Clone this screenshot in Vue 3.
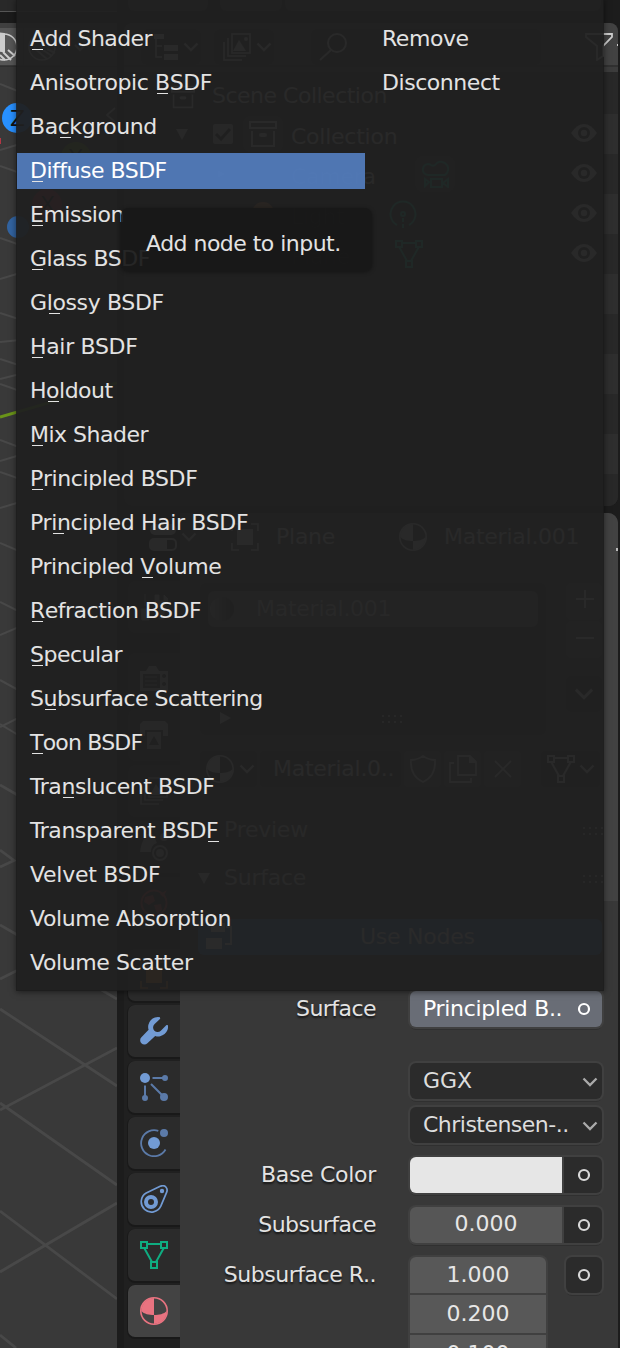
<script setup>
// [before, access key, after, letter spacing in px]
const shaders = [
  ['', 'A', 'dd Shader', -0.6],
  ['Anisotropic ', 'B', 'SDF', -0.4],
  ['Ba', 'c', 'kground', -0.45],
  ['', 'D', 'iffuse BSDF', -0.5],
  ['', 'E', 'mission', -0.5],
  ['', 'G', 'lass BSDF', -0.5],
  ['G', 'l', 'ossy BSDF', -0.37],
  ['', 'H', 'air BSDF', -0.33],
  ['H', 'o', 'ldout', -0.5],
  ['', 'M', 'ix Shader', -0.5],
  ['', 'P', 'rincipled BSDF', -0.4],
  ['Pr', 'i', 'ncipled Hair BSDF', -0.35],
  ['Principled ', 'V', 'olume', -0.41],
  ['', 'R', 'efraction BSDF', -0.5],
  ['', 'S', 'pecular', -0.5],
  ['S', 'u', 'bsurface Scattering', -0.52],
  ['', 'T', 'oon BSDF', -0.8],
  ['Tra', 'n', 'slucent BSDF', -0.45],
  ['Transparent BSD', 'F', '', -0.45],
  ['Velvet BSDF', '', '', -0.28],
  ['Volume Absorption', '', '', -0.41],
  ['Volume Scatter', '', '', -0.4],
]
const links = ['Remove', 'Disconnect']
const active = 3
const tabs = ['tool', 'render', 'output', 'layers', 'scene', 'world', 'object', 'wrench', 'particles', 'physics', 'constraint', 'mesh', 'material']
</script>

<template>
  <div class="screen">
    <!-- shared icon shapes -->
    <svg class="defs" width="0" height="0">
      <defs>
        <symbol id="chev" viewBox="0 0 16 16"><path d="M1.500 4.500 8 11l6.500-6.500" fill="none" stroke="currentColor" stroke-width="2.300" /></symbol>
        <symbol id="ball" viewBox="0 0 28 28">
          <circle cx="14" cy="14" r="13.200" fill="none" stroke="currentColor" stroke-width="1.600" />
          <path d="M14 1v17C9 18 4 17 1.300 14A13 13 0 0 1 14 1ZM14 18c5 0 10-1 12.700-4A13 13 0 0 1 14 27Z" fill="currentColor" />
        </symbol>
        <symbol id="mesh" viewBox="0 0 28 28">
          <g fill="none" stroke="currentColor" stroke-width="2"><path d="M1 1h6v6H1zM21 1h6v6h-6zM11 21h6v6h-6zM7 3h14M4.500 7.500 12 21M23.500 7.500 16 21" /></g>
        </symbol>
        <symbol id="eye" viewBox="0 0 28 20">
          <path d="M1 10Q7 1 14 1t13 9q-6 9-13 9T1 10Z" fill="currentColor" /><circle cx="14" cy="10" r="6" fill="#292929" /><circle cx="14" cy="10" r="3.200" fill="currentColor" />
        </symbol>
        <symbol id="archive" viewBox="0 0 28 28">
          <g fill="none" stroke="currentColor" stroke-width="2"><path d="M1 2h26v6H1zM3 11v15h22V11" /></g><rect x="10" y="13" width="8" height="4" rx="2" fill="currentColor" />
        </symbol>
        <symbol id="ring" viewBox="0 0 14 14"><circle cx="7" cy="7" r="5" fill="none" stroke="currentColor" stroke-width="2.200" /></symbol>
      </defs>
    </svg>

    <div class="viewport">
      <svg width="117" height="1348" viewBox="0 0 117 1348">
        <rect width="117" height="11" fill="#292929" />
        <path d="M0 11.500h117" stroke="#555" />
        <rect y="12" width="117" height="11" fill="#1b1b1b" />
        <rect y="23" width="117" height="42" fill="#404040" />
        <rect y="28" width="23" height="37" fill="#565656" /><rect x="24" y="28" width="36" height="37" fill="#505050" />
        <path d="M0 66.500h117" stroke="#303030" />
        <g stroke="#484848" stroke-width="2" fill="none">
          <path d="M0 84 40 100M0 150 40 138M0 166 40 180M0 238 40 252M0 279 40 267M0 313 40 326M0 342 40 338M0 359 40 372M0 379 40 369M0 384 40 398M0 440 40 455M0 461 40 449M0 472 40 486M0 508 40 496M0 543 40 560M0 602 40 622M0 635 40 618M0 680 40 702M0 727 40 707M0 724 40 748" />
          <path d="M0 785 40 808M0 850 14 860.500 0 867M0 925 40 948M0 979 40 959M0 1009 117 1086M100 989l17 10M0 1110 117 1048M0 1103 117 1185M0 1211 117 1299M0 1272 117 1203M0 1335l16 13" stroke-width="2.800" />
        </g>
        <path d="M0 417 117 383" stroke="#6a9419" stroke-width="3" />
        <circle cx="4" cy="47" r="13" fill="none" stroke="#ccc" stroke-width="1.600" />
        <path d="M-8 47V36a14 14 0 0 1 12-2v17q-6 0-12-2ZM3 52l8 8M8 50l7 6M0 55l5 5" fill="#ccc" stroke="#ccc" stroke-width="2" />
        <circle cx="42" cy="47" r="13" fill="none" stroke="#bbb" stroke-width="1.600" /><path d="M34 48l13 11M40 48l12 8M47 49l8 4" stroke="#bbb" stroke-width="2" />
        <path d="m75 45 5 5 5-5" fill="none" stroke="#bbb" stroke-width="2" />
        <circle cx="17" cy="118" r="15" fill="#2890ff" /><circle cx="76" cy="157" r="15" fill="#698e20" /><circle cx="47" cy="204" r="15" fill="#b03442" /><circle cx="18" cy="227" r="11" fill="#3263a0" />
        <rect y="138" width="1" height="6" fill="#b33644" />
        <path d="m115 108-8 7 8 7" fill="none" stroke="#bbb" stroke-width="2" />
        <text x="10" y="126" fill="#111">Z</text><text x="69" y="165" fill="#111">Y</text><text x="40" y="212" fill="#111">X</text>
      </svg>
    </div>

    <div class="side">
      <div class="topstrip"><i class="a"></i><i class="b"></i><i class="c"></i></div>
      <div class="outliner">
        <div class="ohead">
          <span class="btn tree"><svg width="28" height="28" viewBox="0 0 28 28"><path d="M1 1h10v5H1z" fill="currentColor" /><path d="M3 6v18h6M3 13h6" fill="none" stroke="currentColor" stroke-width="1.500" /><path d="M11 12h14v6H11zM11 21h14v6H11z" fill="currentColor" /></svg><svg class="ch"><use href="#chev" /></svg></span>
          <span class="btn img"><svg width="28" height="28" viewBox="0 0 28 28"><path d="M9 1h18v19H9zM5 5v18h18M1 9v18h18" fill="none" stroke="currentColor" stroke-width="1.700" /><path d="m10 18 6-11 7 11z" fill="currentColor" /><circle cx="23" cy="6" r="2" fill="currentColor" /></svg><svg class="ch"><use href="#chev" /></svg></span>
          <span class="search"><svg width="28" height="28" viewBox="0 0 28 28"><circle cx="18" cy="10" r="9" fill="none" stroke="currentColor" stroke-width="2" /><path d="M12 17 1 27" stroke="currentColor" stroke-width="2" /></svg></span>
          <span class="filter"><svg width="36" height="28" viewBox="0 0 36 28"><path d="M1 1h26v3l-9 9v10l-6 4V13L1 4Z" fill="none" stroke="currentColor" stroke-width="1.800" /><path d="M33 11v2" stroke="currentColor" stroke-width="2" /></svg></span>
        </div>
        <div class="orow first"><svg class="ic sm"><use href="#archive" /></svg><span>Scene Collection</span></div>
        <div class="orow alt"><b class="tri"></b><svg class="check" viewBox="0 0 20 20"><rect width="20" height="20" rx="2" fill="#aaa" /><path d="m3 10 5 5 9-10" fill="none" stroke="#222" stroke-width="3" /></svg><span class="pill"><svg class="ic"><use href="#archive" /></svg></span><span class="name">Collection</span><svg class="eye"><use href="#eye" /></svg></div>
        <div class="orow"><b class="tri right"></b><svg class="ic cam" viewBox="0 0 28 28"><path d="M2 10a6 6 0 0 1 10-4 6 6 0 1 1 10 8H8a6 6 0 0 1-6-4ZM9 18h11v9H9zM21 22l6-4v9zM3 19l4 3-4 3z" fill="currentColor" /></svg><span class="name">Camera</span><span class="pill green gcam"><svg class="ic" viewBox="0 0 28 28"><g fill="none" stroke="currentColor" stroke-width="2"><path d="M2 9a5 5 0 0 1 8-4q3 2 6-2a6 6 0 1 1 8 12H7A5 5 0 0 1 2 9ZM10 19h11v8H10zM22 23l5-4v8zM4 19l4 3-4 4z" /></g></svg></span><svg class="eye"><use href="#eye" /></svg></div>
        <div class="orow alt"><svg class="ic orange lamp" viewBox="0 0 28 28"><circle cx="14" cy="13" r="11" fill="currentColor" /></svg><span class="name">Light</span><svg class="ic green glight" viewBox="0 0 28 28"><g fill="none" stroke="currentColor" stroke-width="2"><path d="M8 25a12.500 12.500 0 1 1 12 0" /><circle cx="14" cy="14" r="2" /><path d="M14 18v12" stroke-dasharray="4 2" /></g></svg><svg class="eye"><use href="#eye" /></svg></div>
        <div class="orow"><i class="lampgap"></i><span class="name">Plane</span><svg class="ic green gmesh"><use href="#mesh" /></svg><svg class="eye"><use href="#eye" /></svg></div>
        <div class="orow alt"></div><div class="orow"></div><div class="orow alt"></div><div class="orow"></div><div class="orow alt"></div><div class="orow last"></div>
      </div>

      <div class="props">
        <div class="tabs">
          <div v-for="t in tabs" :key="t" class="tab" :class="t">
            <svg v-if="t === 'tool'" class="ic" viewBox="0 0 28 28"><path d="M5 1v12M1 16h8v11H2zM15 2v6q4 4 4 6v12h5V14q4-3 4-8l-4-4v6h-5V2z" fill="currentColor" stroke="currentColor" /></svg>
            <svg v-else-if="t === 'render'" class="ic" viewBox="0 0 28 28"><path d="M0 6h6l3-5h7l3 5h9v20H0ZM3 9v14h17V9ZM24 9a2 2 0 1 0 .1 0ZM24 17a2 2 0 1 0 .1 0Z" fill="currentColor" fill-rule="evenodd" /><path d="M5 12h12M5 16h12M5 20h12" stroke="currentColor" /></svg>
            <svg v-else-if="t === 'output'" class="ic" viewBox="0 0 28 28"><path d="M0 3 3 0h22l3 3v12h-5V9H5v6H0ZM7 11h14v17H7ZM9 24h10l-5-9z" fill="currentColor" fill-rule="evenodd" /></svg>
            <svg v-else-if="t === 'layers'" class="ic" viewBox="0 0 28 28"><path d="M9 1h18v19H9zM5 5v18h18M1 9v18h18" fill="none" stroke="currentColor" stroke-width="1.700" /><path d="m10 18 6-11 7 11z" fill="currentColor" /></svg>
            <svg v-else-if="t === 'scene'" class="ic" viewBox="0 0 28 28"><path d="M7 1h6l4 9q-6 2-6 9H0Q1 9 7 1Z" fill="currentColor" /><circle cx="20" cy="20" r="7" fill="none" stroke="currentColor" stroke-width="2" /><circle cx="20" cy="20" r="4" fill="currentColor" /><circle cx="24" cy="4" r="4" fill="currentColor" /></svg>
            <svg v-else-if="t === 'world'" class="ic" viewBox="0 0 28 28"><circle cx="14" cy="14" r="12.500" fill="none" stroke="currentColor" stroke-width="2" /><path d="M5 8l8-2 2 6-6 4-5-3zM14 16l7-1 1 6-5 4zM20 5l7-4-4 7z" fill="currentColor" /></svg>
            <svg v-else-if="t === 'object'" class="ic" viewBox="0 0 28 28"><path d="M6 6h16v16H6z" fill="currentColor" /><path d="M1 8V1h7M20 1h7v7M27 20v7h-7M8 27H1v-7" fill="none" stroke="currentColor" stroke-width="1.700" /></svg>
            <svg v-else-if="t === 'wrench'" class="ic" viewBox="0 0 28 28"><path d="M20 .3A9.800 9.800 0 0 0 8.600 12.800L1.400 20.200a4.200 4.200 0 0 0 6 6l7.800-7.300A9.800 9.800 0 0 0 28 8.200l-1.500-.2-5.700 5.700a4.500 4.500 0 0 1-6.400-6.400l5.800-5.600Z" fill="currentColor" /></svg>
            <svg v-else-if="t === 'particles'" class="ic" viewBox="0 0 28 28"><circle cx="5" cy="5" r="5" fill="#729bd4" /><g fill="#5b7aa8" stroke="#5b7aa8" stroke-width="2"><circle cx="25" cy="5" r="2" /><circle cx="5" cy="25" r="2" /><circle cx="24" cy="24" r="3" /><path d="M12.500 5H24M5 12.500V24M11 11l11 11" /></g></svg>
            <svg v-else-if="t === 'physics'" class="ic" viewBox="0 0 28 28"><path d="M18.300 1.900A13 13 0 1 0 25.500 20.500" fill="none" stroke="#5b7aa8" stroke-width="1.800" /><circle cx="14" cy="14" r="6" fill="#729bd4" /><circle cx="24" cy="4" r="4" fill="#5b7aa8" /></svg>
            <svg v-else-if="t === 'constraint'" class="ic" viewBox="0 0 28 28"><path d="M6.200 7.900 20.700 1.100C25-.5 28.200 3 26.700 7.200L20.800 21.200A10.300 10.300 0 1 1 6.200 7.900Z" fill="none" stroke="currentColor" stroke-width="1.700" /><circle cx="11" cy="17" r="5" fill="none" stroke="currentColor" stroke-width="4" /><circle cx="22" cy="6" r="2.200" fill="currentColor" /></svg>
            <svg v-else-if="t === 'mesh'" class="ic"><use href="#mesh" /></svg>
            <svg v-else class="ic"><use href="#ball" /></svg>
          </div>
        </div>
        <div class="panel">
          <div class="phead">
            <svg class="ic edit" viewBox="0 0 28 28"><rect x="1" y="1" width="26" height="11" rx="5" fill="currentColor" /><rect x="1" y="16" width="26" height="11" rx="4" fill="none" stroke="currentColor" stroke-width="2" /><path d="M2 17h16v10H2z" fill="currentColor" /></svg>
            <svg class="ch"><use href="#chev" /></svg>
            <svg class="ic obj" viewBox="0 0 28 28"><path d="M6 6h16v16H6z" fill="currentColor" /><path d="M1 8V1h7M20 1h7v7M27 20v7h-7M8 27H1v-7" fill="none" stroke="currentColor" stroke-width="1.700" /></svg>
            <span class="plane">Plane</span>
            <svg class="ic mat"><use href="#ball" /></svg>
            <span>Material.001</span>
          </div>
          <div class="slots">
            <div class="list">
              <div class="slot"><i class="sphere"></i><span>Material.001</span></div>
              <div class="lfoot"><b class="tri right"></b><i class="dots"></i></div>
            </div>
            <div class="lbtns">
              <span><svg width="18" height="18" viewBox="0 0 18 18"><path d="M0 9h18M9 0v18" stroke="currentColor" stroke-width="2" /></svg></span>
              <span><svg width="18" height="18" viewBox="0 0 18 18"><path d="M0 9h18" stroke="currentColor" stroke-width="2" /></svg></span>
              <span class="dn"><svg class="big"><use href="#chev" /></svg></span>
            </div>
          </div>
          <div class="mrow">
            <span class="mb"><svg class="ic"><use href="#ball" /></svg><svg class="ch"><use href="#chev" /></svg></span>
            <span class="mname">Material.0..</span>
            <span class="mbtn"><svg class="ic" viewBox="0 0 28 28"><path d="M14 1q6 4 12 4 1 16-12 22Q1 21 2 5q6 0 12-4Z" fill="none" stroke="currentColor" stroke-width="1.800" /></svg></span>
            <span class="mbtn"><svg class="ic" viewBox="0 0 28 28"><path d="M9 1h12l6 6v13H9zM5 8H1v19h21v-4" fill="none" stroke="currentColor" stroke-width="1.900" /><path d="M20 0v8h8z" fill="currentColor" /></svg></span>
            <span class="mbtn x"><svg class="ic" viewBox="0 0 28 28"><path d="m6 6 16 16M22 6 6 22" stroke="currentColor" stroke-width="1.900" /></svg></span>
            <span class="mb last"><svg class="ic"><use href="#mesh" /></svg><svg class="ch"><use href="#chev" /></svg></span>
          </div>
          <div class="phd prev"><span>Preview</span><i class="dots"></i></div>
          <div class="phd"><b class="tri"></b><span>Surface</span><i class="dots"></i></div>
          <div class="nodes"><svg class="ic" viewBox="0 0 28 28"><path d="M5 0h14v9H5zM0 15h16v11H0z" fill="currentColor" /><path d="M20 4h5v17h-6" fill="none" stroke="currentColor" stroke-width="2" /></svg><span>Use Nodes</span></div>

          <div class="field surf"><label>Surface</label><div class="box sel"><span>Principled B..</span><svg class="ring"><use href="#ring" /></svg></div></div>
          <div class="field ggx"><label></label><div class="box"><span>GGX</span><svg class="ch"><use href="#chev" /></svg></div></div>
          <div class="field chr"><label></label><div class="box"><span>Christensen-..</span><svg class="ch"><use href="#chev" /></svg></div></div>
          <div class="field base"><label>Base Color</label><div class="box split"><i class="swatch"></i><em><svg class="ring"><use href="#ring" /></svg></em></div></div>
          <div class="field sub"><label>Subsurface</label><div class="box split"><i class="num">0.000</i><em><svg class="ring"><use href="#ring" /></svg></em></div></div>
          <div class="field rad"><label>Subsurface R..</label><div class="stack"><i>1.000</i><i>0.200</i><i>0.100</i></div><div class="box dot"><svg class="ring"><use href="#ring" /></svg></div></div>
        </div>
      </div>
    </div>

    <div class="menu">
      <ul class="col">
        <li v-for="(s, i) in shaders" :key="i" :class="{ on: i === active }" :style="{ letterSpacing: s[3] + 'px' }">{{ s[0] }}<u v-if="s[1]">{{ s[1] }}</u>{{ s[2] }}</li>
      </ul>
      <ul class="col right"><li v-for="l in links" :key="l">{{ l }}</li></ul>
    </div>
    <div class="tip">Add node to input.</div>
  </div>
</template>

<style>
html, body { margin: 0; background: #161616; overflow: hidden; }
</style>

<style scoped>
.screen { position: relative; display: flex; width: 620px; height: 1348px; overflow: hidden; background: #1b1b1b; color: #ddd; font: 22px/36px "DejaVu Sans", sans-serif; white-space: nowrap; }
.screen * { box-sizing: border-box; }
svg { display: block; flex: none; }
.defs { position: absolute; }
i, em, b { font-style: normal; font-weight: normal; }
.viewport { width: 117px; background: #393939; overflow: hidden; flex: none; }
.side { width: 503px; padding: 0 2px 0 7px; display: flex; flex-direction: column; background: #1c1c1c; flex: none; }
.ic { width: 28px; height: 28px; flex: none; }
.ch { width: 16px; height: 16px; }
.topstrip { height: 23px; flex: none; display: flex; background: #1c1c1c; }
.topstrip i { height: 11px; background: #383838; border-radius: 0 0 6px 6px; }
.topstrip .a { width: 80px; margin-left: 4px; }
.topstrip .b { width: 62px; margin-left: 12px; }
.topstrip .c { width: 316px; margin-left: 3px; }
.outliner { height: 483px; flex: none; background: #282828; border-radius: 8px 8px 9px 9px; overflow: hidden; letter-spacing: -0.25px; }
.ohead { height: 49px; background: #424242; padding: 6px 0 7px 17px; display: flex; color: #ccc; box-shadow: inset 0 -5px 0 #3c3c3c, inset 0 -7px 0 #303030; }
.ohead span { height: 36px; display: flex; align-items: center; border-radius: 6px; flex: none; }
.btn { background: #333; gap: 2px; }
.tree { width: 60px; padding-left: 12px; }
.img { width: 60px; padding-left: 9px; margin-left: 13px; gap: 5px; }
.search { width: 230px; margin-left: 37px; padding-left: 8px; background: #2a2a2a; }
.filter { margin-left: 44px; width: 36px; }
.orow { height: 40px; display: flex; align-items: center; position: relative; color: #ccc; background: #282828; }
.orow.alt { background: #2e2e2e; }
.orow.first { height: 42px; padding: 8px 0 0 47px; letter-spacing: -0.5px; }
.first span { margin-left: 17px; padding-bottom: 2px; }
.orow .name { padding-top: 6px; }
.orow .sm { width: 24px; height: 24px; }
.tri { width: 0; height: 0; border: 6px solid transparent; border-top: 11px solid #bbb; border-bottom: 0; margin-left: 52px; }
.tri.right { border: 6px solid transparent; border-left: 11px solid #bbb; border-right: 0; }
.orow .tri.right { margin-left: 94px; border-width: 4px; border-left-width: 8px; border-right: 0; }
.check { width: 20px; height: 20px; margin-left: 25px; }
.pill { width: 40px; height: 36px; border-radius: 8px; background: #444; display: flex; align-items: center; justify-content: center; margin: 0 8px 0 10px; }
.eye { width: 28px; height: 20px; position: absolute; left: 446px; top: 9px; }
.green { color: #16b896; }
.orange { color: #c8703a; }
.cam { margin: 0 14px 0 23px; color: #555577; }
.gcam { margin: 0 0 0 39px; }
.lamp { margin: 0 14px 0 125px; }
.lampgap { width: 167px; }
.glight { margin-left: 44px; }
.gmesh { margin-left: 45px; }
.props { margin-top: 7px; height: 835px; flex: none; display: flex; border-radius: 8px 10px 0 0; background: #383838; overflow: hidden; letter-spacing: -0.25px; }
.tabs { width: 56px; padding: 68px 0 0 4px; background: #202020; flex: none; }
.tab { height: 52px; margin-bottom: 4px; padding: 12px; border-radius: 7px 0 0 7px; background: #2b2b2b; box-shadow: 0 1px 0 1px #191919; color: #aaa; }
.tab.tool, .tab.world { margin-bottom: 20px; }
.tab.world { color: #c04040; }
.tab.object { color: #e08030; }
.tab.wrench, .tab.constraint { color: #729bd4; }
.tab.mesh { color: #0fad81; }
.tab.material { background: #434343; color: #e87380; }
.panel { width: 438px; display: flex; flex-direction: column; background: linear-gradient(#424242 388px, #383838 388px); flex: none; }
.phead { height: 48px; display: flex; align-items: center; color: #ccc; margin-left: -31px; }
.phead::after { content: ""; width: 2px; height: 3px; margin: 24px 0 0 auto; background: #bbb; }
.phead .ch { margin-left: 4px; }
.phead .obj { margin-left: 34px; }
.phead .plane { margin-left: 17px; width: 123px; }
.phead .mat { margin-right: 17px; }
.slots { display: flex; height: 152px; margin: 22px 0 0 20px; color: #bbb; }
.list { width: 346px; padding: 8px; background: #303030; border-radius: 6px; }
.slot { height: 36px; background: #5c5c5c; border-radius: 6px; display: flex; align-items: center; padding-left: 2px; }
.sphere { width: 24px; height: 24px; border-radius: 50%; background: linear-gradient(90deg, #999, #222); margin-right: 22px; }
.lfoot { display: flex; height: 14px; margin-top: 84px; align-items: center; }
.lfoot .tri { margin-left: 12px; margin-right: 149px; }
.dots { width: 22px; height: 10px; background: radial-gradient(circle, #aaa 1.200px, transparent 1.500px) 0 0/6px 6px; }
.lbtns { width: 36px; margin-left: 20px; display: flex; flex-direction: column; gap: 1px; color: #ccc; }
.lbtns span { height: 37px; background: #505050; padding: 7px 0 0 10px; border-radius: 5px; }
.lbtns span + span { padding-top: 8px; }
.lbtns .dn { margin-top: 17px; background: #333; height: 36px; padding-left: 8px; }
.big { width: 20px; height: 20px; }
.mrow { display: flex; margin: 16px 0 0 20px; height: 36px; color: #ccc; gap: 3px; }
.mrow span { display: flex; align-items: center; background: #303030; border-radius: 4px; flex: none; }
.mrow .mb { width: 57px; padding-left: 6px; gap: 5px; }
.mname { width: 141px; padding-left: 13px; }
.mrow .mbtn { width: 37px; justify-content: center; background: #505050; }
.mrow .last { margin-left: 17px; width: 59px; gap: 4px; }
.phd { height: 48px; display: flex; align-items: center; color: #bbb; }
.phd.prev { margin-top: 19px; }
.phd .tri { margin-left: 18px; margin-right: 14px; }
.phd.prev span { margin-left: 44px; }
.phd .dots { margin-left: auto; margin-right: 15px; }
.nodes { height: 36px; width: 404px; margin: 17px 0 0 18px; background: #4772b3; border-radius: 6px; display: flex; align-items: center; padding-left: 8px; color: #ddd; flex: none; }
.nodes span { margin-left: 126px; }
.field { display: flex; height: 36px; flex: none; }
.field label { width: 196px; margin-right: 34px; text-align: right; color: #e3e3e3; text-shadow: 0 2px 2px rgba(0,0,0,.6); line-height: 36px; letter-spacing: -0.55px; }
.field.base label { letter-spacing: -0.3px; }
.field.rad label { letter-spacing: -0.45px; }
.box { width: 192px; height: 36px; border-radius: 6px; background: #2b2b2b; box-shadow: 0 0 0 2px #404040, 0 3px 0 0 #303030; padding: 0 11px 0 13px; display: flex; align-items: center; justify-content: space-between; line-height: 36px; overflow: hidden; }
.box > span { margin-top: -2px; padding-top: 2px; }
.chr .box > span { letter-spacing: -0.52px; }
.surf .box > span { letter-spacing: -0.33px; }
.ggx .box > span { letter-spacing: 0; }
.box .ch { margin-right: -7px; margin-top: 1px; color: #aaa; }
.ring { width: 14px; height: 14px; color: #d8d8d8; }
.sel { background: #696d76; color: #fff; }
.sel .ring { color: #fff; }
.surf { margin-top: 36px; }
.ggx { margin-top: 36px; }
.chr { margin-top: 8px; }
.base, .sub, .rad { margin-top: 14px; }
.split { padding: 0; gap: 2px; background: #404040; }
.split i { width: 152px; height: 36px; flex: none; }
.split em { flex: 1; height: 36px; background: #2b2b2b; padding: 11px 11px 11px 13px; }
.swatch { background: #e6e6e6; }
.num { background: #565656; text-align: center; color: #e6e6e6; line-height: 34px; letter-spacing: 0; }
.stack { width: 136px; height: 120px; border-radius: 6px 6px 0 0; box-shadow: 0 0 0 2px #404040; display: flex; flex-direction: column; gap: 2px; background: #404040; overflow: hidden; letter-spacing: 0; }
.stack i { height: 38px; background: #585858; color: #e6e6e6; text-align: center; line-height: 37px; flex: none; }
.stack i:first-child { height: 36px; line-height: 35px; }
.dot { width: 36px; margin-left: 20px; padding: 11px; }
.menu { position: absolute; left: 17px; top: 0; width: 586px; height: 990px; padding-top: 21px; display: flex; background: rgba(32,32,32,.95); box-shadow: 0 0 0 1px rgba(28,28,28,.8), 0 1px 6px 1px rgba(0,0,0,.5); color: #e3e3e3; }
.col { list-style: none; margin: 0; padding: 0; width: 348px; display: flex; flex-direction: column; gap: 8px; }
.col.right { width: 234px; margin-left: 4px; letter-spacing: -0.45px; }
.col li { height: 36px; padding-left: 13px; line-height: 36px; }
.col li.on { background: rgba(84,127,194,.9); color: #fff; }
u { text-decoration: none; position: relative; }
u::after { content: ""; position: absolute; left: 2px; bottom: 1px; width: 11px; height: 1px; background: #e3e3e3; }
.tip { position: absolute; left: 121px; top: 208px; width: 251px; height: 63px; padding-left: 25px; line-height: 72px; letter-spacing: -0.53px; background: rgba(24,24,24,.93); border-radius: 7px; color: #e3e3e3; box-shadow: 0 1px 4px rgba(0,0,0,.4); }
</style>
